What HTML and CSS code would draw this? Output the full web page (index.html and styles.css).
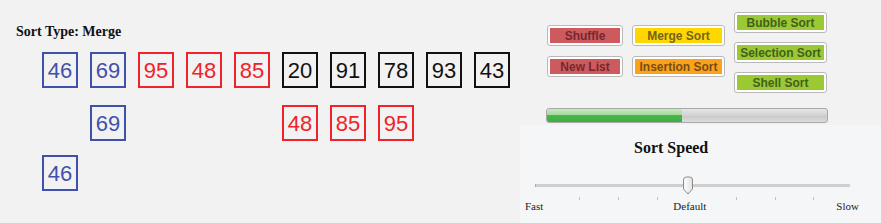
FILE: index.html
```html
<!DOCTYPE html>
<html>
<head>
<meta charset="utf-8">
<link rel="stylesheet" href="styles.css">
</head>
<body>
<div class="page">
  <section class="sorter">
    <h1 class="sort-type">Sort Type: Merge</h1>
    <div class="row row-1">
      <div class="box blue">46</div>
      <div class="box blue">69</div>
      <div class="box red">95</div>
      <div class="box red">48</div>
      <div class="box red">85</div>
      <div class="box black">20</div>
      <div class="box black">91</div>
      <div class="box black">78</div>
      <div class="box black">93</div>
      <div class="box black">43</div>
    </div>
    <div class="row row-2">
      <div class="box blue c2">69</div>
      <div class="box red c6">48</div>
      <div class="box red c7">85</div>
      <div class="box red c8">95</div>
    </div>
    <div class="row row-3">
      <div class="box blue c1">46</div>
    </div>
  </section>
  <section class="controls">
    <div class="buttons">
      <div class="btn-col col-a">
        <button class="btn w76"><span class="inner red-btn">Shuffle</span></button>
        <button class="btn w76"><span class="inner red-btn">New List</span></button>
      </div>
      <div class="btn-col col-a">
        <button class="btn w93"><span class="inner gold-btn">Merge Sort</span></button>
        <button class="btn w93"><span class="inner orange-btn">Insertion Sort</span></button>
      </div>
      <div class="btn-col col-b">
        <button class="btn w93"><span class="inner green-btn">Bubble Sort</span></button>
        <button class="btn w93"><span class="inner green-btn">Selection Sort</span></button>
        <button class="btn w93"><span class="inner green-btn">Shell Sort</span></button>
      </div>
    </div>
    <div class="progress"><div class="progress-fill" style="width:135px"></div></div>
    <div class="speed-panel">
      <h2 class="speed-title">Sort Speed</h2>
      <div class="slider">
        <div class="track"></div>
        <svg class="handle" width="12" height="19" viewBox="0 0 12 19">
          <defs>
            <linearGradient id="hg" x1="0" y1="0" x2="1" y2="0">
              <stop offset="0" stop-color="#ffffff"/>
              <stop offset="1" stop-color="#e2e2e2"/>
            </linearGradient>
          </defs>
          <path d="M1.5 4 Q1.5 1 4.5 1 L7.5 1 Q10.5 1 10.5 4 L10.5 13 L6 18 L1.5 13 Z" fill="url(#hg)" stroke="#8a8a8a" stroke-width="1"/>
        </svg>
        <div class="ticks">
          <span class="tick" style="left:44px"></span>
          <span class="tick" style="left:83px"></span>
          <span class="tick" style="left:122px"></span>
          <span class="tick" style="left:201px"></span>
          <span class="tick" style="left:240px"></span>
          <span class="tick" style="left:278px"></span>
        </div>
      </div>
      <div class="labels">
        <span>Fast</span>
        <span>Default</span>
        <span>Slow</span>
      </div>
    </div>
  </section>
</div>
</body>
</html>
```
FILE: styles.css
```css
html, body {
  margin: 0;
  padding: 0;
}
body {
  background: #f2f2f2;
  width: 881px;
  height: 223px;
  overflow: hidden;
}
.page {
  display: flex;
  height: 223px;
}
.sorter {
  width: 520px;
  padding-left: 16px;
  padding-top: 24px;
  box-sizing: border-box;
}
.sort-type {
  margin: 0;
  font-family: "Liberation Serif", "Times New Roman", serif;
  font-size: 14px;
  line-height: 15px;
  font-weight: bold;
  color: #111;
}
.row {
  display: grid;
  grid-template-columns: repeat(10, 36px);
  column-gap: 12px;
  margin-left: 26px;
}
.row-1 { margin-top: 13px; }
.row-2 { margin-top: 17px; }
.row-3 { margin-top: 14px; }
.c1 { grid-column: 1; }
.c2 { grid-column: 2; }
.c6 { grid-column: 6; }
.c7 { grid-column: 7; }
.c8 { grid-column: 8; }
.box {
  width: 36px;
  height: 36px;
  box-sizing: border-box;
  border: 2px solid;
  display: flex;
  align-items: center;
  justify-content: center;
  font-family: "Liberation Sans", Arial, sans-serif;
  font-size: 22px;
  line-height: 1;
  padding-top: 1px;
}
.blue { color: #3f51ad; border-color: #3f51ad; }
.red { color: #f0222a; border-color: #f0222a; }
.black { color: #111; border-color: #111; }

.controls {
  width: 361px;
  display: flex;
  flex-direction: column;
  padding-top: 12px;
  box-sizing: border-box;
}
.buttons {
  display: flex;
  gap: 9px;
  padding-left: 27px;
}
.btn-col {
  display: flex;
  flex-direction: column;
}
.col-a { padding-top: 13px; gap: 10px; }
.col-b { gap: 9px; }
.btn {
  height: 21px;
  box-sizing: border-box;
  margin: 0;
  padding: 2px;
  border: 1px solid #b9b9b9;
  border-radius: 3px;
  background: #fff;
  display: flex;
  cursor: pointer;
}
.w76 { width: 76px; }
.w93 { width: 93px; }
.inner {
  flex: 1;
  display: flex;
  align-items: center;
  justify-content: center;
  font-family: "Liberation Sans", Tahoma, sans-serif;
  font-weight: bold;
  font-size: 12px;
  line-height: 1;
  white-space: nowrap;
}
.red-btn { background: #cc5a5f; color: #77282c; }
.gold-btn { background: #fed700; color: #76641a; }
.orange-btn { background: #fba21b; color: #784d18; }
.green-btn { background: #9ac934; color: #44601c; }

.progress {
  margin-top: 15px;
  margin-left: 26px;
  width: 282px;
  height: 15px;
  box-sizing: border-box;
  border: 1px solid #a9a9a9;
  border-radius: 3px;
  background: linear-gradient(#e6e6e6, #d2d2d2 50%, #c8c8c8 51%, #dcdcdc);
  overflow: hidden;
}
.progress-fill {
  height: 100%;
  background: linear-gradient(#c6e9c0, #a3da9c 45%, #48b84a 50%, #3fae42);
}

.speed-panel {
  margin-top: 2px;
  flex: 1;
  background: #f5f6f8;
  padding-top: 15px;
}
.speed-title {
  margin: 0 0 0 114px;
  font-family: "Liberation Serif", "Times New Roman", serif;
  font-size: 16px;
  line-height: 16px;
  font-weight: bold;
  color: #111;
}
.slider {
  position: relative;
  margin-top: 28px;
  margin-left: 15px;
  width: 315px;
  height: 3px;
}
.track {
  height: 3px;
  background: #cfcfcf;
  border-left: 1px solid #aaa;
  box-sizing: border-box;
}
.handle {
  position: absolute;
  left: 147px;
  top: -8px;
}
.ticks {
  position: absolute;
  left: 0;
  top: 13px;
  width: 100%;
}
.tick {
  position: absolute;
  top: 0;
  width: 1px;
  height: 3px;
  background: #c2c2c2;
}
.labels {
  display: flex;
  justify-content: space-between;
  margin-top: 13px;
  margin-left: 5px;
  width: 334px;
  font-family: "Liberation Serif", "Times New Roman", serif;
  font-size: 11px;
  line-height: 12px;
  color: #222;
}
```
